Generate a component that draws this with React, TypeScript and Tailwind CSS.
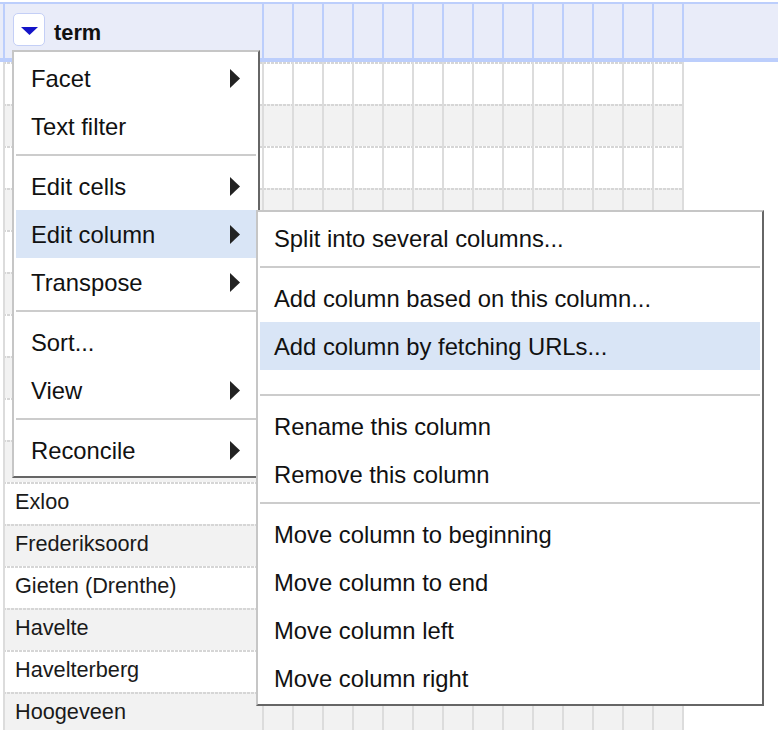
import React from 'react';

// rows 0-9 sit under the open column menu, so their cells show no text
const names = [
  '',
  '',
  '',
  '',
  '',
  '',
  '',
  '',
  '',
  '',
  'Exloo',
  'Frederiksoord',
  'Gieten (Drenthe)',
  'Havelte',
  'Havelterberg',
  'Hoogeveen',
];

const emptyCols = Array.from({ length: 14 }, (_, i) => i);

function RightArrow() {
  return (
    <svg width="10" height="19" viewBox="0 0 10 19" aria-hidden="true">
      <polygon points="0,0 10,9.5 0,19" fill="#222" />
    </svg>
  );
}

function Separator() {
  return <div className="mt-[4px] mb-[6px] h-[2px] bg-[#cccccc]" />;
}

type ItemProps = {
  label: string;
  sub?: boolean;
  active?: boolean;
  indent: string;
};

function MenuItem({ label, sub, active, indent }: ItemProps) {
  return (
    <div
      className={`flex h-[48px] items-center justify-between pr-[16px] pt-[1px] text-[23.8px] text-[#111] ${indent} ${
        active ? 'bg-[#d9e5f6]' : 'bg-white'
      }`}
    >
      <span>{label}</span>
      {sub && <RightArrow />}
    </div>
  );
}

function ColumnMenu() {
  return (
    <div className="absolute left-[12px] top-[50px] w-[248px] border-2 border-t-[#c6c6c6] border-l-[#c6c6c6] border-r-[#666] border-b-[#666] bg-white p-[2px]">
      <MenuItem label="Facet" sub indent="pl-[15px]" />
      <MenuItem label="Text filter" indent="pl-[15px]" />
      <Separator />
      <MenuItem label="Edit cells" sub indent="pl-[15px]" />
      <MenuItem label="Edit column" sub active indent="pl-[15px]" />
      <MenuItem label="Transpose" sub indent="pl-[15px]" />
      <Separator />
      <MenuItem label="Sort..." indent="pl-[15px]" />
      <MenuItem label="View" sub indent="pl-[15px]" />
      <Separator />
      <MenuItem label="Reconcile" sub indent="pl-[15px]" />
    </div>
  );
}

function EditColumnMenu() {
  return (
    <div className="absolute left-[256px] top-[210px] w-[508px] border-2 border-t-[#c6c6c6] border-l-[#c6c6c6] border-r-[#666] border-b-[#666] bg-white p-[2px]">
      <MenuItem label="Split into several columns..." indent="pl-[14px]" />
      <Separator />
      <MenuItem label="Add column based on this column..." indent="pl-[14px]" />
      <MenuItem label="Add column by fetching URLs..." active indent="pl-[14px]" />
      <div className="h-[20px]" />
      <Separator />
      <MenuItem label="Rename this column" indent="pl-[14px]" />
      <MenuItem label="Remove this column" indent="pl-[14px]" />
      <Separator />
      <MenuItem label="Move column to beginning" indent="pl-[14px]" />
      <MenuItem label="Move column to end" indent="pl-[14px]" />
      <MenuItem label="Move column left" indent="pl-[14px]" />
      <MenuItem label="Move column right" indent="pl-[14px]" />
    </div>
  );
}

export default function App() {
  return (
    <div className="relative h-[730px] w-[778px] overflow-hidden bg-white font-['Liberation_Sans',Arial,sans-serif]">
      {/* header row */}
      <div className="mt-[2px] flex h-[60px] border-t-2 border-b-4 border-[#bccefc] bg-[#e9ecf9]">
        <div className="ml-[3px] flex w-[259px] shrink-0 items-start border-l-2 border-[#bccefc] pl-[8px] pt-[9px]">
          <div className="flex h-[33px] w-[32px] items-center justify-center rounded-[5px] border-[1.5px] border-[#c4cff6] bg-white pt-[2px]">
            <svg width="17" height="8" viewBox="0 0 17 8" aria-hidden="true">
              <polygon points="0,0 17,0 8.5,8" fill="#1414c8" />
            </svg>
          </div>
          <span className="ml-[9px] mt-[4px] text-[21.8px] font-bold leading-[32px] text-[#111]">term</span>
        </div>
        {emptyCols.map((c) => (
          <div key={c} className="w-[30px] shrink-0 border-l-2 border-[#bccefc]" />
        ))}
        <div className="flex-1 border-l-2 border-[#bccefc]" />
      </div>

      {/* rows */}
      {names.map((name, i) => (
        <div
          key={i}
          className={`ml-[3px] flex h-[42px] w-[681px] border-r-2 border-[#dcdcdc] bg-[image:repeating-linear-gradient(90deg,#d6d6d6_0px,#d6d6d6_3px,transparent_3px,transparent_4px)] bg-[length:100%_2px] bg-no-repeat ${
            i % 2 === 1 ? 'bg-[#f2f2f2]' : 'bg-white'
          }`}
        >
          <div className="w-[259px] shrink-0 border-l-2 border-[#dcdcdc] pl-[10px] pt-[2px] text-[21.7px] leading-[36px] text-[#1a1a1a]">
            {name}
          </div>
          {emptyCols.map((c) => (
            <div key={c} className="w-[30px] shrink-0 border-l-2 border-[#dcdcdc]" />
          ))}
        </div>
      ))}

      <ColumnMenu />
      <EditColumnMenu />
    </div>
  );
}
